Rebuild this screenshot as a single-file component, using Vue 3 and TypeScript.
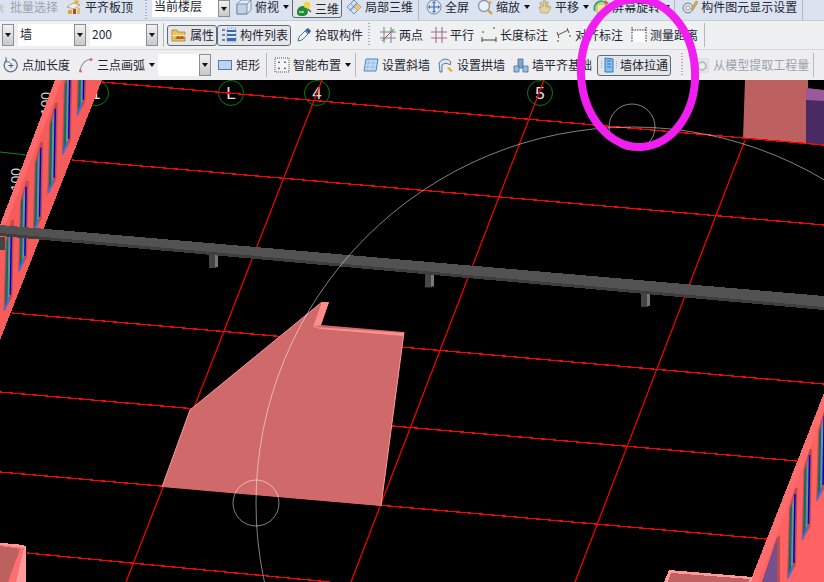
<script setup lang="ts">
type Item =
  | { kind: 'tool'; icon: string; label: string; ml: number; arrow?: boolean; active?: boolean; disabled?: boolean }
  | { kind: 'select'; value: string; width: number; ml: number }
  | { kind: 'sep'; ml: number }
  | { kind: 'handle'; ml: number }

const tool = (icon: string, label: string, ml: number, extra: Partial<Item> = {}) =>
  ({ kind: 'tool', icon, label, ml, ...extra }) as Item
const sep = (ml: number): Item => ({ kind: 'sep', ml })
const handle = (ml: number): Item => ({ kind: 'handle', ml })
const select = (value: string, width: number, ml: number): Item => ({ kind: 'select', value, width, ml })

const rows: { name: string; items: Item[] }[] = [
  {
    name: 'row-top',
    items: [
      tool('batch', '批量选择', -9, { disabled: true }),
      tool('align', '平齐板顶', 8),
      handle(12),
      select('当前楼层', 66, 5),
      tool('cube', '俯视', 6, { arrow: true }),
      tool('three', '三维', 3, { active: true }),
      tool('local', '局部三维', 4),
      sep(5),
      tool('full', '全屏', 7),
      tool('zoom', '缩放', 8, { arrow: true }),
      tool('pan', '平移', 6, { arrow: true }),
      tool('rotate', '屏幕旋转', 4, { arrow: true }),
      sep(4),
      tool('settings', '构件图元显示设置', 7),
      sep(5),
    ],
  },
  {
    name: 'row-mid',
    items: [
      select('', 0, 2),
      select('墙', 56, 4),
      select('200', 56, 4),
      sep(5),
      tool('attr', '属性', 3, { active: true }),
      tool('list', '构件列表', 0, { active: true }),
      tool('picker', '拾取构件', 5),
      handle(5),
      tool('points', '两点', 10),
      tool('parallel', '平行', 8),
      tool('lenDim', '长度标注', 7),
      tool('alignDim', '对齐标注', 8),
      tool('measure', '测量距离', 8),
      sep(6),
    ],
  },
  {
    name: 'row-low',
    items: [
      tool('pointLen', '点加长度', 3),
      tool('arc', '三点画弧', 8, { arrow: true }),
      select('', 41, 3),
      tool('rect', '矩形', 6),
      sep(6),
      tool('smart', '智能布置', 7, { arrow: true }),
      sep(4),
      tool('slant', '设置斜墙', 7),
      tool('arch', '设置拱墙', 8),
      tool('level', '墙平齐基础', 8),
      tool('pull', '墙体拉通', 5, { active: true }),
      handle(10),
      tool('model', '从模型提取工程量', 11, { disabled: true }),
      sep(4),
    ],
  },
]

const hLines = [
  [102, 82, 824, 145],
  [72, 160, 824, 225],
  [12, 313, 824, 384],
  [0, 392, 797, 461],
  [0, 472, 767, 539],
  [27, 553, 330, 582],
]
const vLines = [
  [322, 80, 126, 582],
  [544, 80, 351, 582],
  [745, 140, 575, 582],
]
const axes = [
  { x: 96, label: '1' },
  { x: 231, label: 'L' },
  { x: 317, label: '4' },
  { x: 540, label: '5' },
]
const stubs = [208, 424, 640]

// each window is placed by its lower tip, one step along the wall per entry
const leftWindows = [-3, -2, -1, 0, 1, 2, 3].map((i) => ({ x: 48.3 - 14.6 * i, y: 192.7 + 39 * i }))
const rightWindows = [0, 1, 2].map((i) => ({ x: 788 + 14.6 * i, y: 578 - 39 * i }))
</script>

<template>
  <div class="app">
    <svg class="sprite" width="0" height="0">
      <symbol id="i-batch" viewBox="0 0 16 16">
        <path d="M8 4l6 4-3 1 2 4-2 1-2-4-3 2z" fill="#c4c8d0" />
      </symbol>
      <symbol id="i-align" viewBox="0 0 16 16">
        <path d="M1 8l6-4 7 2-6 4z" fill="#f4efdc" stroke="#8a7a50" stroke-width=".6" />
        <path d="M2 11h4v4H2z" fill="#d9a93a" />
        <path d="M7 10h3v5H7z" fill="#b5482a" />
        <path d="M11 9h3v6h-3z" fill="#e2c26a" />
        <path d="M9 1l4 1-1 3-4-1z" fill="#e0b040" />
      </symbol>
      <symbol id="i-cube" viewBox="0 0 16 16">
        <path d="M1 5l4-4h10v10l-4 4H1z" fill="#dfeaf4" stroke="#6c7f92" stroke-width=".8" />
        <path d="M1 5h10v10H1z" fill="#bcd3e8" stroke="#6c7f92" stroke-width=".8" />
        <path d="M11 5l4-4" stroke="#6c7f92" stroke-width=".8" />
      </symbol>
      <symbol id="i-three" viewBox="0 0 16 16">
        <path d="M1 11c0-4 3-6 6-6s5 2 5 5-2 5-6 5-5-1-5-4z" fill="#1f8a3c" />
        <circle cx="11" cy="4" r="3.2" fill="#f0d53a" />
        <path d="M3 10h5v2H3z" fill="#8fd08a" />
        <path d="M12 8l3 3" stroke="#555" stroke-width="1.2" />
      </symbol>
      <symbol id="i-local" viewBox="0 0 16 16">
        <path d="M1 8l7-7 7 7-7 7z" fill="#cfe0f2" stroke="#5d7ea6" stroke-width=".8" />
        <path d="M4.5 4.5l7 7M8 1l-3 3m6 0l-7 7M11.5 4.5l-7 7" stroke="#5d7ea6" stroke-width=".7" />
        <path d="M8 8l3.5-3.5L15 8l-3.5 3.5z" fill="#f2c36a" />
      </symbol>
      <symbol id="i-full" viewBox="0 0 16 16">
        <circle cx="8" cy="8" r="7" fill="#dbe7f5" stroke="#6f87a8" />
        <path d="M8 3v10M3 8h10" stroke="#3c6cb0" stroke-width="1.2" />
        <path d="M8 2l2 2H6zM8 14l2-2H6zM2 8l2-2v4zM14 8l-2-2v4z" fill="#3c6cb0" />
      </symbol>
      <symbol id="i-zoom" viewBox="0 0 16 16">
        <circle cx="7" cy="7" r="5.5" fill="#e8f0fa" stroke="#8a9ab0" stroke-width="1.4" />
        <path d="M11 11l4 4" stroke="#c9a43c" stroke-width="2.4" />
        <path d="M13 1l1 2 2 .5-2 .5-1 2-1-2-2-.5 2-.5z" fill="#e0b040" />
      </symbol>
      <symbol id="i-pan" viewBox="0 0 16 16">
        <path d="M3 8l2 6h7l3-6-2-1-1 2V3l-1.500-.5L10 8 9 1.500 7.500 1.500 7 8 5.500 3 4 3.500 5 9z" fill="#e6d4a0" stroke="#a89058" stroke-width=".6" />
      </symbol>
      <symbol id="i-rotate" viewBox="0 0 16 16">
        <path d="M2 12A7 7 0 0 1 14 5" fill="none" stroke="#3da860" stroke-width="2" />
        <rect x="4" y="5" width="9" height="9" fill="#f4e59a" stroke="#b09030" stroke-width=".7" />
        <path d="M12 1l4 3-4 2z" fill="#e05a3a" />
      </symbol>
      <symbol id="i-settings" viewBox="0 0 16 16">
        <circle cx="6" cy="9" r="5" fill="#d8dfe8" stroke="#76828f" />
        <circle cx="6" cy="9" r="2" fill="#fff" stroke="#76828f" stroke-width=".7" />
        <path d="M9 10l5-8 2 1-5 8z" fill="#e6b04a" stroke="#8a6a28" stroke-width=".5" />
      </symbol>
      <symbol id="i-attr" viewBox="0 0 16 16">
        <path d="M1 3h5l1 2h7v9H1z" fill="#eec45a" stroke="#9a7a2c" stroke-width=".7" />
        <path d="M4 12l3-4 2 2 2-2 3 4z" fill="#a8662a" />
        <path d="M1 8h14v1H1z" fill="#fff3c4" />
      </symbol>
      <symbol id="i-list" viewBox="0 0 16 16">
        <path d="M1 2h3v2H1zM1 7h3v2H1zM1 12h3v2H1z" fill="#5d8ac0" />
        <path d="M6 3h9v2H6zM6 7h9v2H6zM6 11h9v3H6z" fill="#2f6cb0" />
        <path d="M6 1h9v14H6z" fill="none" stroke="#5d8ac0" stroke-dasharray="1 1" stroke-width=".8" />
      </symbol>
      <symbol id="i-picker" viewBox="0 0 16 16">
        <path d="M2 14l1-4 6-6 3 3-6 6z" fill="#eef4fb" stroke="#4c6f9c" />
        <path d="M9 3l3-2 3 3-2 3z" fill="#2f5f9c" />
      </symbol>
      <symbol id="i-points" viewBox="0 0 16 16">
        <path d="M4 0v16M11 0v16M0 5h16M0 11h16" stroke="#7b7fa8" />
        <path d="M2 14L14 2" stroke="#d84040" />
        <circle cx="4" cy="12" r="1.500" fill="#6cb04c" />
        <circle cx="12" cy="4" r="1.500" fill="#6cb04c" />
      </symbol>
      <symbol id="i-parallel" viewBox="0 0 16 16">
        <path d="M5 0v16M11 0v16" stroke="#7b6fa0" />
        <path d="M0 5h16M0 11h16" stroke="#c06060" />
      </symbol>
      <symbol id="i-lenDim" viewBox="0 0 16 16">
        <path d="M1 10v5M15 10v5M1 13h14" stroke="#444" fill="none" />
        <path d="M1 4h2v2H1zM12 0h2v2h-2z" fill="#6cc04c" />
      </symbol>
      <symbol id="i-alignDim" viewBox="0 0 16 16">
        <path d="M2 8l10-5M1 5l2 6M11 1l2 5" stroke="#555" fill="none" />
        <path d="M1 13h2v2H1zM13 8h2v2h-2z" fill="#6cc04c" />
      </symbol>
      <symbol id="i-measure" viewBox="0 0 16 16">
        <rect x="1" y="3" width="14" height="12" fill="#fff" />
        <path d="M1 0v7M15 0v7M1 3h14M1 8v7M15 8v7" stroke="#333" stroke-dasharray="1.500 1" fill="none" />
      </symbol>
      <symbol id="i-pointLen" viewBox="0 0 16 16">
        <path d="M4 3a6.500 6.500 0 1 0 5-1" fill="none" stroke="#5a7288" stroke-width="1.300" />
        <path d="M3 0v5h4" fill="none" stroke="#5a7288" />
        <path d="M8 6v5M5.500 8.500h5" stroke="#2c5d8c" />
      </symbol>
      <symbol id="i-arc" viewBox="0 0 16 16">
        <path d="M2 14C3 7 7 3 13 2" fill="none" stroke="#7e8fa0" stroke-width="1.200" />
        <circle cx="2.500" cy="14" r="1.500" fill="#e0695a" />
        <circle cx="13" cy="2.500" r="1.500" fill="#e0695a" />
      </symbol>
      <symbol id="i-rect" viewBox="0 0 16 16">
        <rect x="1.500" y="3.500" width="13" height="9" fill="#bcd3f2" stroke="#5578b8" />
      </symbol>
      <symbol id="i-smart" viewBox="0 0 16 16">
        <rect x="1" y="1" width="14" height="14" fill="#f4f5f6" stroke="#555" stroke-dasharray="1 1" />
        <path d="M5 4l1 2-2 0zM11 4l1 2-2 0zM5 10l1 2-2 0zM11 10l1 2-2 0z" fill="#333" />
      </symbol>
      <symbol id="i-slant" viewBox="0 0 16 16">
        <path d="M3 2h12l-2 12H1z" fill="#c4dcf4" stroke="#4c84c0" />
        <path d="M3 6h11M2 10h11M6 2L4 14M11 2L9 14" stroke="#86b0dc" stroke-width=".6" />
      </symbol>
      <symbol id="i-arch" viewBox="0 0 16 16">
        <path d="M1 6c3-5 9-5 12-1l-1 3c-2-2-6-2-8 0v7H2z" fill="#d8e6f4" stroke="#466c94" stroke-width=".9" />
        <path d="M9 11l4 4 2-1-4-4z" fill="#e6a83c" />
      </symbol>
      <symbol id="i-level" viewBox="0 0 16 16">
        <path d="M5 2h5v9H5z" fill="#7fa4d4" stroke="#3c5f90" stroke-width=".7" />
        <path d="M1 9h5v6H1zM10 9h5v6h-5z" fill="#9cbce4" stroke="#3c5f90" stroke-width=".7" />
      </symbol>
      <symbol id="i-pull" viewBox="0 0 16 16">
        <path d="M4 1l8 1v13H4z" fill="#8cc0ee" stroke="#2f78c0" />
        <path d="M6 4h4M6 7h4M6 10h4" stroke="#2f78c0" />
        <path d="M0 4v8M16 4v8" stroke="#2f78c0" stroke-dasharray="1 1" />
      </symbol>
      <symbol id="i-model" viewBox="0 0 16 16">
        <rect x="1" y="2" width="13" height="13" fill="#eceef0" stroke="#d0d3d6" />
        <circle cx="8" cy="9" r="4" fill="none" stroke="#b8bcc0" stroke-width="2" />
      </symbol>
    </svg>

    <header class="toolbar">
      <div v-for="row in rows" :key="row.name" class="row" :class="row.name">
        <template v-for="(item, i) in row.items" :key="i">
          <div
            v-if="item.kind === 'tool'"
            class="tool"
            :class="{ active: item.active, disabled: item.disabled }"
            :style="{ marginLeft: item.ml + 'px' }"
          >
            <svg class="icon" width="16" height="16"><use :href="'#i-' + item.icon" /></svg>
            <span class="label">{{ item.label }}</span>
            <i v-if="item.arrow" class="arrow" />
          </div>
          <div v-else-if="item.kind === 'select'" class="select" :style="{ marginLeft: item.ml + 'px' }">
            <span v-if="item.width" class="field" :style="{ width: item.width + 'px' }">{{ item.value }}</span>
            <span class="drop"><i class="arrow" /></span>
          </div>
          <div v-else :class="item.kind" :style="{ marginLeft: item.ml + 'px' }" />
        </template>
      </div>
    </header>

    <svg class="canvas" viewBox="0 80 824 502">
      <defs>
        <g id="wall-window">
          <polygon points="-1,2 1,-70 7,-90 9.500,-90 8,-13" fill="#c24a4a" />
          <polygon points="0.500,-2 2,-68 5,-78 4,-12" fill="#0a6e62" />
          <polygon points="3,-9 4,-74 6,-82 5.500,-16" fill="#6f8f96" />
          <line x1="7" y1="-84" x2="5.800" y2="-15" stroke="#0000cc" stroke-width="1.500" />
          <line x1="0" y1="0" x2="4.500" y2="-12" stroke="#1e78ff" stroke-width="1.800" />
        </g>
      </defs>

      <g class="dims">
        <text transform="translate(51 92) rotate(-90)" text-anchor="end">100</text>
        <text transform="translate(21 168) rotate(-90)" text-anchor="end">100</text>
      </g>

      <line x1="0" y1="152" x2="27" y2="155" class="green" />
      <line x1="812" y1="543" x2="824" y2="543" class="green" />

      <g v-for="a in axes" :key="a.label">
        <circle :cx="a.x" cy="93" r="12.500" class="axis" />
        <text :x="a.x" y="98.500" class="axis-label">{{ a.label }}</text>
      </g>

      <g class="grid">
        <line v-for="(l, i) in hLines" :key="'h' + i" :x1="l[0]" :y1="l[1]" :x2="l[2]" :y2="l[3]" />
      </g>
      <g class="grid-steep">
        <line v-for="(l, i) in vLines" :key="'v' + i" :x1="l[0]" :y1="l[1]" :x2="l[2]" :y2="l[3]" />
      </g>

      <!-- block, top right -->
      <polygon points="745,80 808,80 808,144 743,138" fill="#bd6060" />
      <polygon points="806,88 824,90 824,146 806,144" fill="#4a2a62" />
      <polygon points="806,88 824,90 824,101 806,100" fill="#9a5a9a" />
      <line x1="743" y1="138" x2="824" y2="145" class="grid-line" />

      <!-- left wall -->
      <polygon points="55,80 102,80 0,340 0,225" fill="#f65c5c" class="crisp" />
      <polygon points="55,80 62,80 0,240 0,225" fill="#ff6a6a" class="crisp" />
      <g v-for="(w, i) in leftWindows" :key="'l' + i" :transform="`translate(${w.x} ${w.y})`">
        <use href="#wall-window" />
      </g>

      <!-- right wall -->
      <polygon points="824,393 824,582 750,582" fill="#ff6262" class="crisp" />
      <polygon points="824,393 824,412 758,582 750,582" fill="#ff6c6c" class="crisp" />
      <polygon points="762,582 777,537 780,535 780,582" fill="#c04c4c" class="crisp" />
      <polygon points="762,582 777,539 777,582" fill="#74508e" class="crisp" />
      <g v-for="(w, i) in rightWindows" :key="'r' + i" :transform="`translate(${w.x} ${w.y})`">
        <use href="#wall-window" />
      </g>

      <!-- pink blocks along the bottom -->
      <polygon points="669,570 753,577 751,582 664,582" fill="#ff9a9a" class="crisp" />
      <polygon points="671,573 750,579 749,582 668,582" fill="#c06060" class="crisp" />
      <polygon points="0,543 16,544 26,546 26,582 0,582" fill="#ff9a9a" class="crisp" />
      <polygon points="0,545 24,548 16,582 0,582" fill="#ff6f6f" class="crisp" />
      <polygon points="0,546 20,549 8,582 0,582" fill="#bd6060" class="crisp" />

      <!-- beam -->
      <rect x="0" y="237" width="5" height="13" fill="#444" />
      <g v-for="x in stubs" :key="x" :transform="`translate(${x} ${254 + (x - 208) * 0.09})`">
        <rect x="1" width="7" height="14" fill="#454545" />
        <rect x="7" width="3" height="13" fill="#777" />
      </g>
      <polygon points="0,225 824,296 824,310 0,236" fill="#3e3e3e" class="crisp" />
      <polygon points="0,225 824,296 824,307 0,233" fill="#525252" class="crisp" />

      <!-- floor slab -->
      <polygon points="190,410 322,302 329,302 321,325 404,332 381,506 162,487" fill="#d06a6a" />
      <polyline points="162,487 190,410 322,302" class="slab-edge" />
      <polyline points="404,332 381,506" class="slab-edge" />
      <polygon points="322,302 329,302 321,325 313,327" fill="#ff8c8c" />
      <polygon points="313,327 404,333 404,336 321,329" fill="#ff9090" />

      <g class="ring">
        <circle cx="632" cy="503" r="376" />
        <circle cx="256" cy="503" r="23" />
        <circle cx="632" cy="127" r="23" />
      </g>
    </svg>

    <svg class="mark" width="824" height="582">
      <ellipse cx="638" cy="73" rx="57" ry="74" transform="rotate(-3 638 73)" />
    </svg>
  </div>
</template>

<style>
html,
body {
  margin: 0;
  background: #000;
}
</style>

<style scoped>
.app {
  position: relative;
  display: flex;
  flex-direction: column;
  width: 824px;
  height: 582px;
  overflow: hidden;
  font-family: "Noto Sans CJK SC", "Liberation Sans", sans-serif;
  font-size: 12px;
  color: #1c2733;
}

.sprite {
  position: absolute;
}

.toolbar {
  flex: none;
  height: 80px;
}

.row {
  display: flex;
  align-items: center;
  overflow: hidden;
  white-space: nowrap;
}

.row-top {
  height: 21px;
  align-items: flex-start;
  background: #dce3f0;
  border-bottom: 1px solid #c8ccd4;
  box-sizing: border-box;
}

.row-mid {
  height: 29px;
  background: #eff0f2;
  border-bottom: 1px solid #d8d8dc;
  box-sizing: border-box;
}

.row-low {
  height: 30px;
  background: #eeeef0;
}

.tool {
  display: flex;
  flex: none;
  align-items: center;
  gap: 3px;
  line-height: 12px;
}

.row-top .tool {
  height: 13px;
}

.tool.active {
  box-sizing: border-box;
  height: 21px;
  padding: 0 2px 0 3px;
  background: #e4e6ea;
  border: 1px solid #5f6b78;
  border-radius: 3px;
}

.row-top .tool.active {
  height: 22px;
  margin-top: -4px;
  padding-top: 3px;
}

.row-low .tool.active {
  height: 21px;
}

.tool.disabled {
  color: #9aa3ae;
}

.icon {
  flex: none;
}

.label {
  display: block;
}

.arrow {
  display: block;
  width: 0;
  height: 0;
  border-top: 4px solid #111;
  border-left: 3.5px solid transparent;
  border-right: 3.5px solid transparent;
}

.tool .arrow {
  margin-left: 1px;
}

.select {
  display: flex;
  flex: none;
  align-items: stretch;
  height: 22px;
}

.row-top .select {
  height: 17px;
}

.field {
  display: block;
  box-sizing: border-box;
  padding-left: 2px;
  line-height: 20px;
  background: #fff;
}

.row-top .field {
  line-height: 12px;
}

.drop {
  display: flex;
  align-items: center;
  justify-content: center;
  box-sizing: border-box;
  width: 12px;
  background: linear-gradient(#f2f2f2, #c8c8c8);
  border: 1px solid #8a8f96;
}

.sep {
  flex: none;
  width: 1px;
  height: 24px;
  background: #b4b8c0;
}

.handle {
  flex: none;
  width: 2px;
  height: 24px;
  background: repeating-linear-gradient(#a8acb2 0 1px, transparent 1px 3px);
}

.canvas {
  display: block;
  flex: 1;
  width: 824px;
  min-height: 0;
  background: #000;
}

.dims text {
  fill: #d0d0d0;
  font-family: "Liberation Sans", sans-serif;
  font-size: 14px;
}

.green {
  stroke: #0a8a0a;
}

.grid line,
.grid-line {
  stroke: #ff0000;
  stroke-width: 1.3;
  shape-rendering: crispEdges;
}

.grid-steep line {
  stroke: #ff0000;
  stroke-width: 1.2;
}

.axis {
  fill: none;
  stroke: #0a7f0a;
}

.axis-label {
  fill: #e0e0e0;
  font-family: "Liberation Sans", sans-serif;
  font-size: 17px;
  text-anchor: middle;
}

.crisp {
  shape-rendering: crispEdges;
}

.slab-edge {
  fill: none;
  stroke: #ff9a9a;
  stroke-width: 1;
}

.ring circle {
  fill: none;
  stroke: rgba(255, 255, 255, 0.5);
  stroke-width: 1;
}

.mark {
  position: absolute;
  top: 0;
  left: 0;
  pointer-events: none;
}

.mark ellipse {
  fill: none;
  stroke: #f01ef0;
  stroke-width: 8;
}
</style>
